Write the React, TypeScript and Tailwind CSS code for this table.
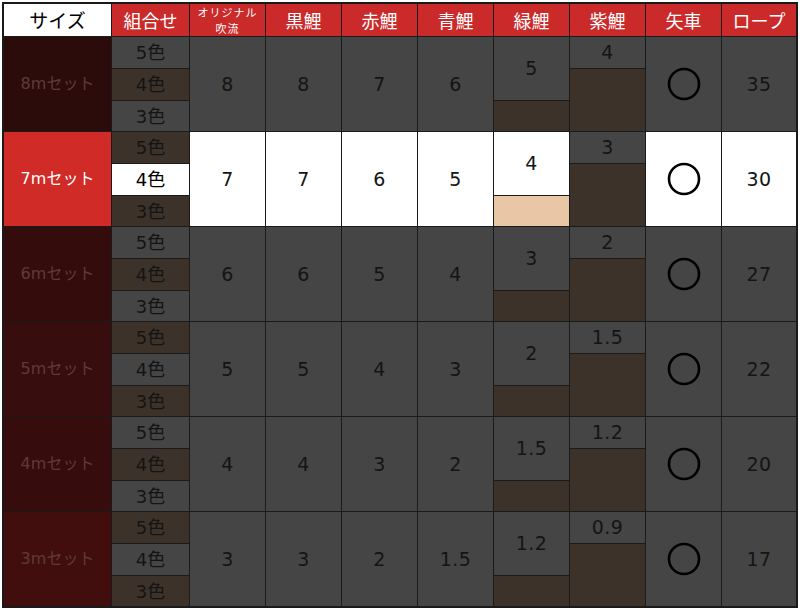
import React from "react";

type Row = {
  size: string;
  vals: string[];
  green: string;
  purple: string;
  rope: string;
  hl: boolean;
  pat: ("g" | "b" | "w")[];
  sizeBg: string;
};

const rows: Row[] = [
  { size: "8mセット", vals: ["8", "8", "7", "6"], green: "5", purple: "4", rope: "35", hl: false, pat: ["g", "b", "g"], sizeBg: "bg-[#2c0b0b]" },
  { size: "7mセット", vals: ["7", "7", "6", "5"], green: "4", purple: "3", rope: "30", hl: true, pat: ["b", "w", "b"], sizeBg: "bg-[#d12b27]" },
  { size: "6mセット", vals: ["6", "6", "5", "4"], green: "3", purple: "2", rope: "27", hl: false, pat: ["g", "b", "g"], sizeBg: "bg-[#340c0c]" },
  { size: "5mセット", vals: ["5", "5", "4", "3"], green: "2", purple: "1.5", rope: "22", hl: false, pat: ["b", "g", "b"], sizeBg: "bg-[#380d0d]" },
  { size: "4mセット", vals: ["4", "4", "3", "2"], green: "1.5", purple: "1.2", rope: "20", hl: false, pat: ["g", "b", "g"], sizeBg: "bg-[#370c0c]" },
  { size: "3mセット", vals: ["3", "3", "2", "1.5"], green: "1.2", purple: "0.9", rope: "17", hl: false, pat: ["b", "g", "b"], sizeBg: "bg-[#420d0d]" },
];

const patBg = { g: "bg-[#454545]", b: "bg-[#3d3229]", w: "bg-white" };
const combos = ["5色", "4色", "3色"];
const rowStarts = ["row-start-1", "row-start-2", "row-start-3"];

const cols =
  "grid grid-cols-[107px_77px_75px_75px_75px_75px_75px_75px_75px_74px] gap-px";

const numFont = { fontFamily: '"DejaVu Sans", "Noto Sans CJK JP", sans-serif' };

function Circle() {
  return (
    <svg width="34" height="34" viewBox="0 0 34 34">
      <circle cx="17" cy="17" r="15" fill="none" stroke="#000" strokeWidth="2.6" />
    </svg>
  );
}

function Group({ r }: { r: Row }) {
  const main = r.hl ? "bg-white" : "bg-[#454545]";
  const cell = "flex items-center justify-center";
  const num = "text-[19px] tracking-[0.5px]";
  return (
    <div className={`${cols} grid-rows-[31px_31px_30px] text-[#141414]`} style={numFont}>
      <div
        className={`${cell} col-start-1 row-start-1 row-span-3 ${r.sizeBg} text-[16px] ${
          r.hl ? "text-white" : "text-[#5e3b39]"
        }`}
      >
        {r.size}
      </div>
      {combos.map((c, i) => (
        <div
          key={c}
          className={`${cell} col-start-2 ${rowStarts[i]} ${patBg[r.pat[i]]} text-[18px] ${
            r.pat[i] === "w" ? "text-black" : ""
          }`}
        >
          {c}
        </div>
      ))}
      <div className={`${cell} col-start-3 row-start-1 row-span-3 ${main} ${num}`}>{r.vals[0]}</div>
      <div className={`${cell} col-start-4 row-start-1 row-span-3 ${main} ${num}`}>{r.vals[1]}</div>
      <div className={`${cell} col-start-5 row-start-1 row-span-3 ${main} ${num}`}>{r.vals[2]}</div>
      <div className={`${cell} col-start-6 row-start-1 row-span-3 ${main} ${num}`}>{r.vals[3]}</div>
      <div className={`${cell} col-start-7 row-start-1 row-span-2 ${main} ${num}`}>{r.green}</div>
      <div className={`col-start-7 row-start-3 ${r.hl ? "bg-[#e8c6a6]" : "bg-[#3d3229]"}`} />
      <div className={`${cell} col-start-8 row-start-1 bg-[#454545] ${num}`}>{r.purple}</div>
      <div className="col-start-8 row-start-2 row-span-2 bg-[#3d3229]" />
      <div className={`${cell} col-start-9 row-start-1 row-span-3 ${main}`}>
        <Circle />
      </div>
      <div className={`${cell} col-start-10 row-start-1 row-span-3 ${main} ${num}`}>{r.rope}</div>
    </div>
  );
}

export default function App() {
  const head = "flex items-center justify-center bg-[#cb2a2a] text-white text-[18px]";
  return (
    <div
      className="w-[800px] h-[610px] bg-white p-[2px]"
      style={{ fontFamily: '"Noto Sans CJK JP", "Noto Sans", sans-serif' }}
    >
      <div className="w-fit border-2 border-[#1a1a1a] bg-[#1a1a1a] flex flex-col gap-px">
        <div className={`${cols} h-[32px]`}>
          <div className="flex items-center justify-center bg-white text-black text-[19px]">サイズ</div>
          <div className={head}>組合せ</div>
          <div className="flex flex-col items-center justify-center bg-[#cb2a2a] text-white text-[11px] leading-[16px] tracking-[1px]">
            <span>オリジナル</span>
            <span>吹流</span>
          </div>
          <div className={head}>黒鯉</div>
          <div className={head}>赤鯉</div>
          <div className={head}>青鯉</div>
          <div className={head}>緑鯉</div>
          <div className={head}>紫鯉</div>
          <div className={head}>矢車</div>
          <div className={head}>ロープ</div>
        </div>
        {rows.map((r) => (
          <Group key={r.size} r={r} />
        ))}
      </div>
    </div>
  );
}
